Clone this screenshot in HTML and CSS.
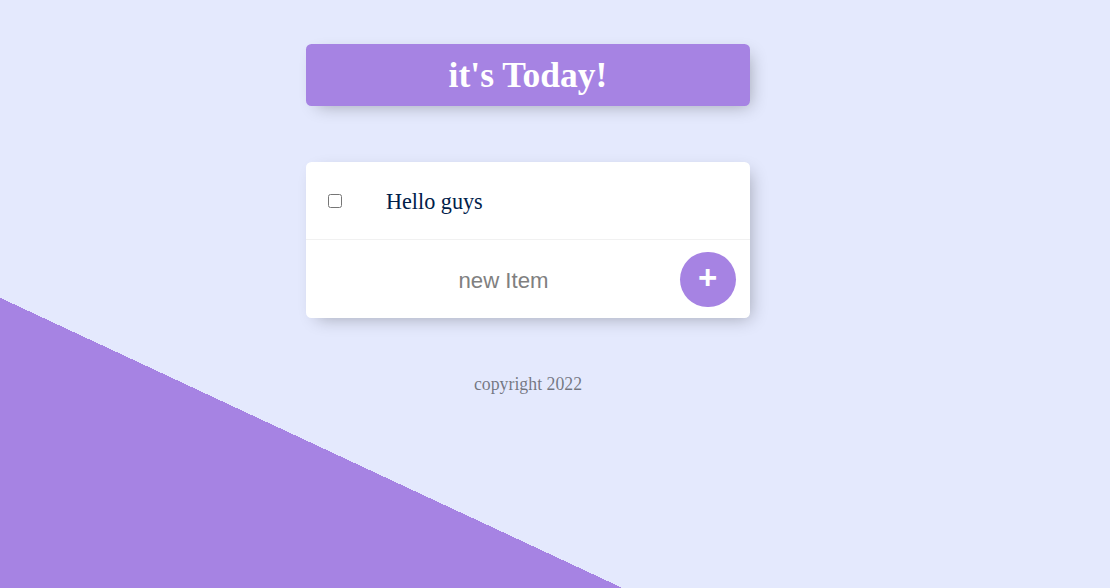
FILE: index.html
```html
<!DOCTYPE html>
<html lang="en">
<head>
<meta charset="utf-8">
<title>To Do List</title>
<link rel="stylesheet" href="styles.css">
</head>
<body>
<div class="page">
  <div class="box heading">
    <h1 class="title">it's Today!</h1>
  </div>
  <div class="box list">
    <div class="item">
      <input class="check" type="checkbox">
      <p class="item-text">Hello guys</p>
    </div>
    <div class="item item-last">
      <form class="new-form" onsubmit="return false">
        <input class="new-input" type="text" placeholder="new Item" autocomplete="off">
        <button class="add-btn" type="submit">+</button>
      </form>
    </div>
  </div>
  <footer class="footer">copyright 2022</footer>
</div>
</body>
</html>
```

FILE: styles.css
```css
html {
  background-color: #E4E9FD;
  background-image: linear-gradient(25deg, #A683E3 50%, #E4E9FD 50%);
  background-size: 1110px 1113px;
  background-repeat: no-repeat;
  font-family: "Liberation Serif", "Times New Roman", serif;
}

body {
  margin: 0;
}

.page {
  width: 1056px;
  padding-top: 44px;
}

.box {
  width: 444px;
  margin: 0 auto;
  background: #fff;
  border-radius: 5.5px;
  box-shadow: 5.5px 5.5px 16.6px -5.5px rgba(0, 0, 0, 0.3);
}

.heading {
  background-color: #A683E3;
  text-align: center;
}

.title {
  margin: 0;
  padding: 11px;
  color: #fff;
  font-size: 35.5px;
  line-height: 40px;
  font-weight: bold;
}

.list {
  margin-top: 56px;
}

.item {
  box-sizing: border-box;
  height: 78px;
  display: flex;
  align-items: center;
  border-bottom: 1px solid #F1F1F1;
}

.item-last {
  border-bottom: 0;
  height: 78px;
  padding-top: 1px;
}

.check {
  width: 14px;
  height: 14px;
  margin: 0 22px;
}

.item-text {
  margin: 0;
  padding: 2px 22px 0;
  font-size: 22.2px;
  color: #00204a;
}

.new-form {
  display: flex;
  align-items: center;
  gap: 5px;
  margin-left: 22px;
}

.new-input {
  box-sizing: border-box;
  width: 347px;
  height: 66.6px;
  border: none;
  padding: 3px 0 0 4px;
  background: transparent;
  text-align: center;
  font-family: "Liberation Sans", Arial, sans-serif;
  font-size: 22.2px;
  font-weight: 200;
  color: #333;
}

.new-input::placeholder {
  color: grey;
  opacity: 1;
}

.new-input:focus {
  outline: none;
}

.add-btn {
  box-sizing: border-box;
  width: 55.5px;
  height: 55.5px;
  border-radius: 50%;
  border: 0;
  padding: 0 0 5px 0;
  background-color: #A683E3;
  color: #fff;
  font-family: "Liberation Sans", Arial, sans-serif;
  font-size: 33px;
  font-weight: bold;
  line-height: 1;
}

.footer {
  margin-top: 55.5px;
  text-align: center;
  color: rgba(0, 0, 0, 0.5);
  font-size: 17.8px;
}
```
